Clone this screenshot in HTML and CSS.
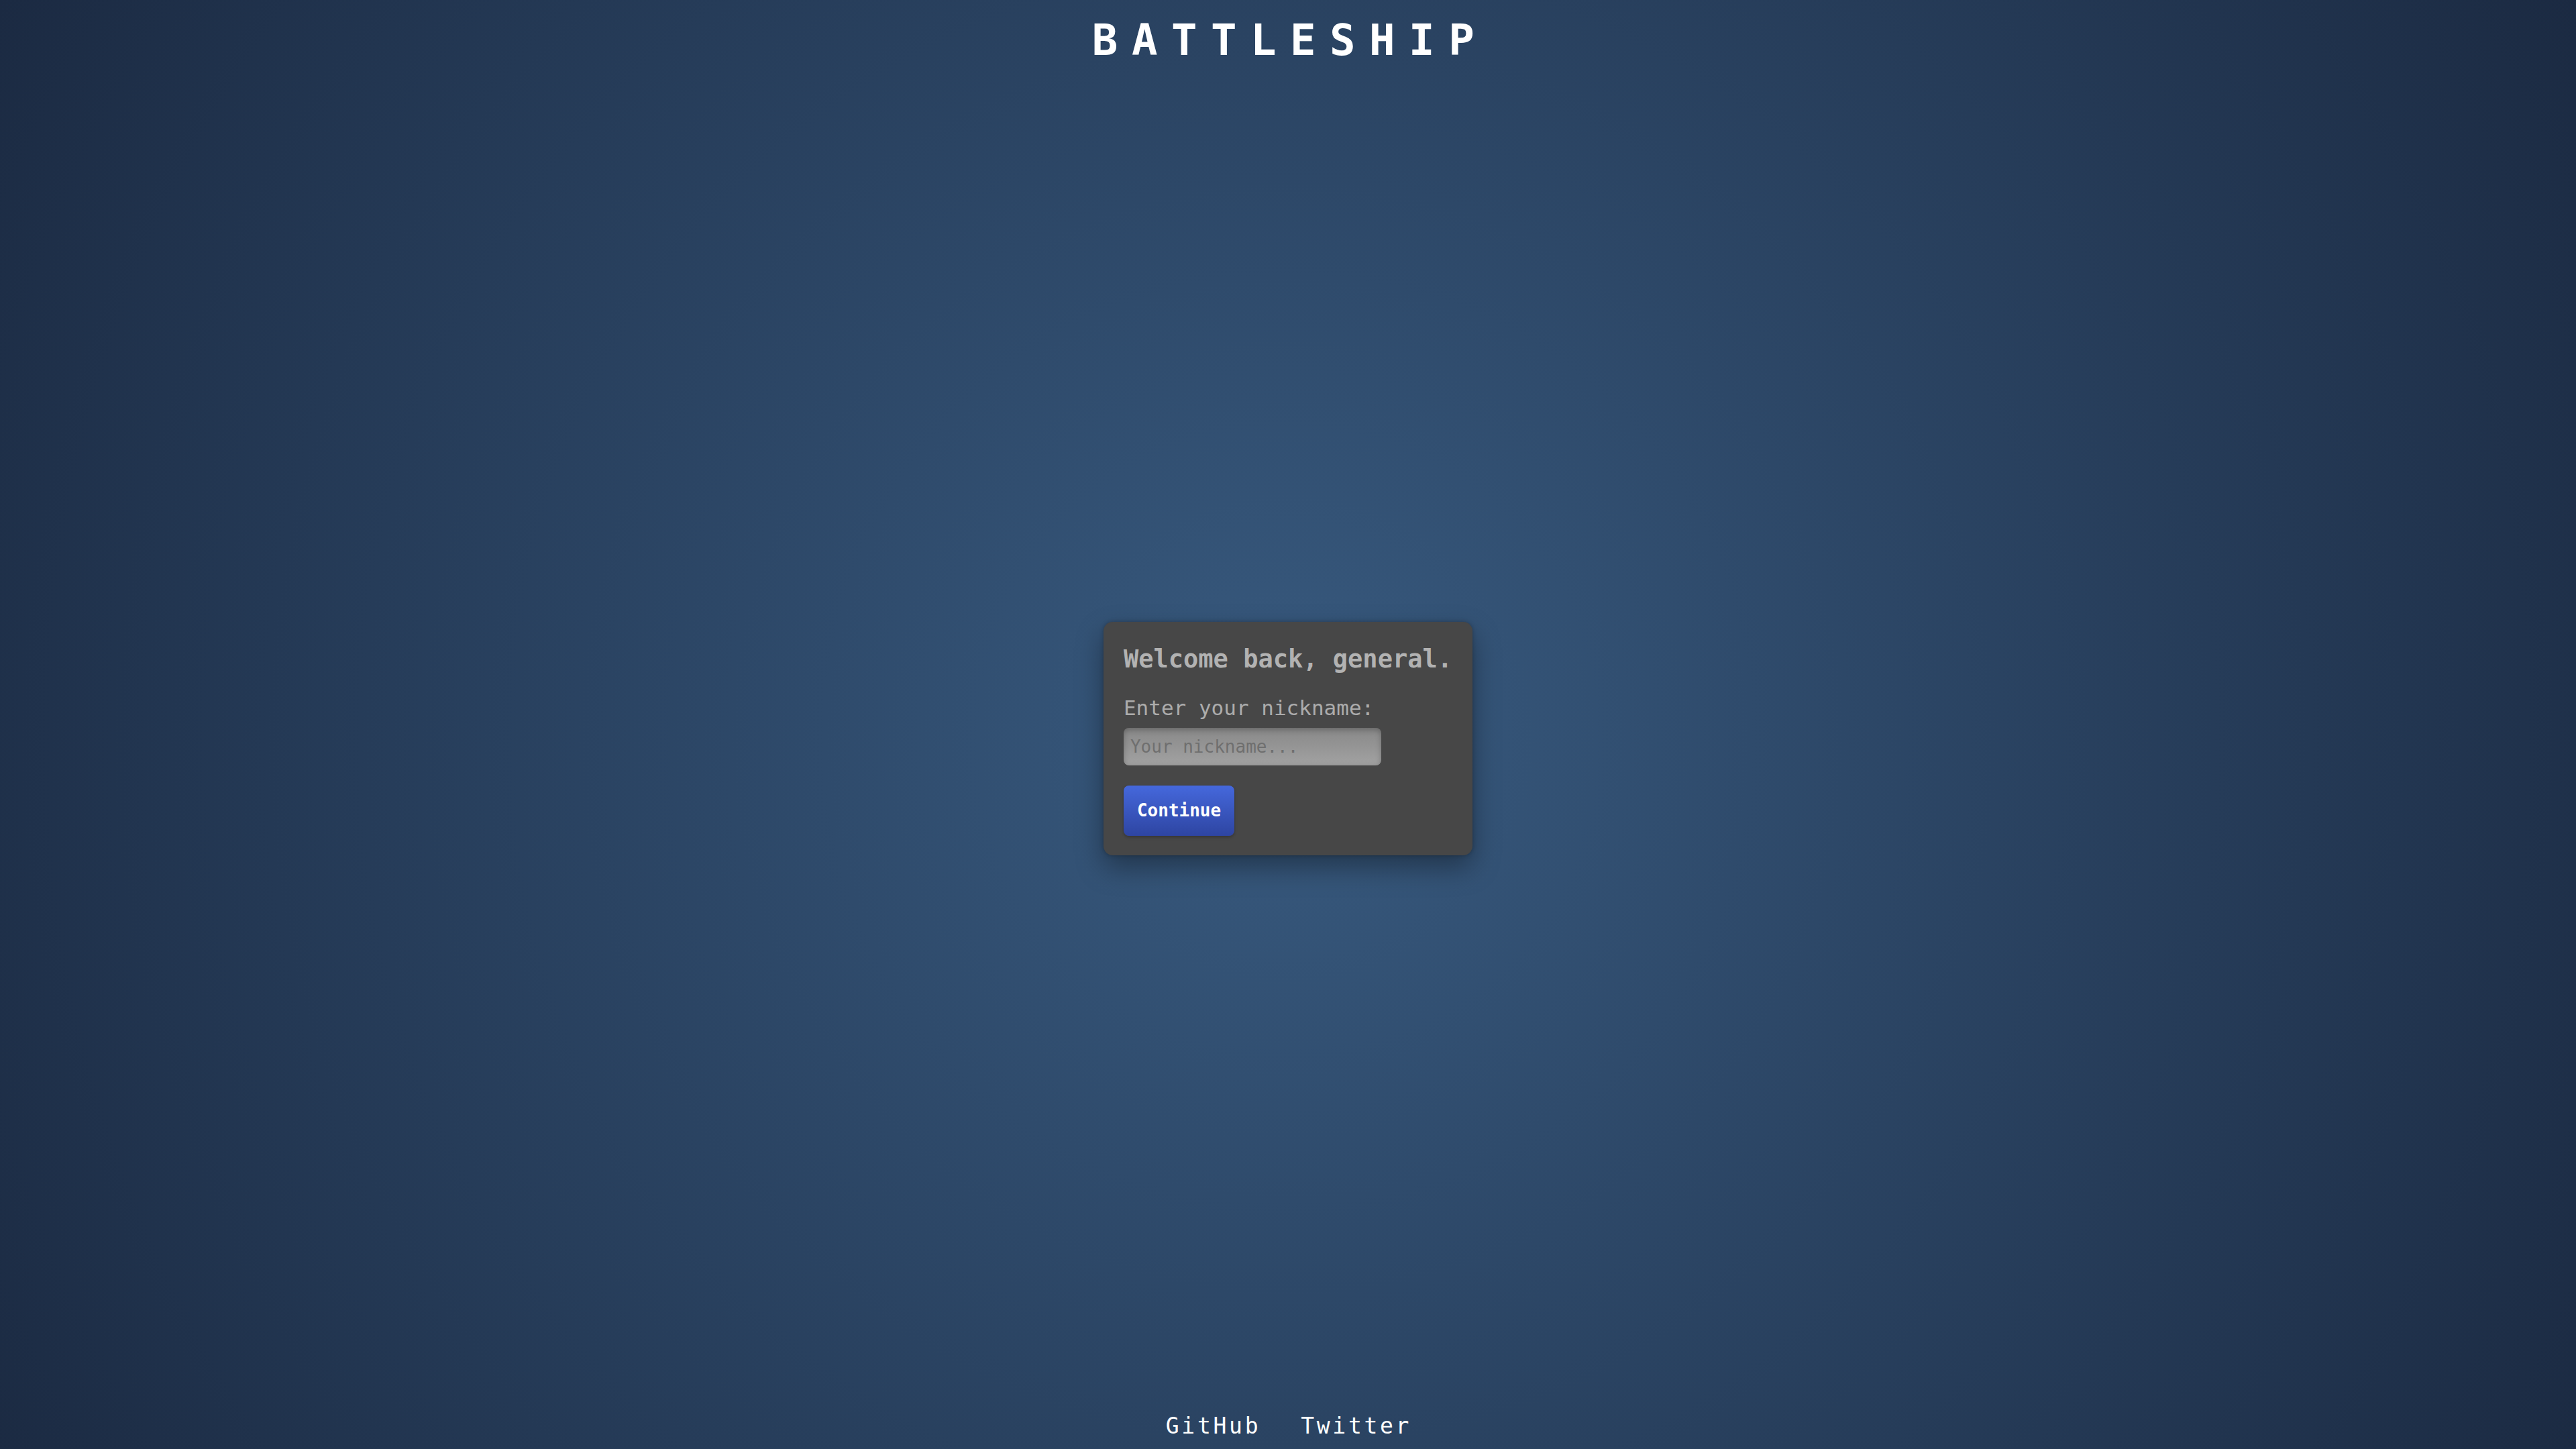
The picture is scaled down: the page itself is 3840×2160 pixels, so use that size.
FILE: index.html
```html
<!DOCTYPE html>
<html lang="en">
<head>
<meta charset="utf-8">
<title>Battleship</title>
<link rel="stylesheet" href="styles.css">
</head>
<body>
<header class="top">
  <h1 class="title">BATTLESHIP</h1>
</header>
<main class="stage">
  <section class="card">
    <h2 class="card-title">Welcome back, general.</h2>
    <label class="field-label" for="nick">Enter your nickname:</label>
    <input class="field" id="nick" type="text" placeholder="Your nickname...">
    <button class="btn" type="button">Continue</button>
  </section>
</main>
<footer class="foot">
  <a class="foot-link" href="#">GitHub</a>
  <a class="foot-link" href="#">Twitter</a>
</footer>
</body>
</html>
```

FILE: styles.css
```css
html, body {
  margin: 0;
  padding: 0;
  height: 100%;
}

body {
  display: flex;
  flex-direction: column;
  min-height: 100vh;
  font-family: "DejaVu Sans Mono", "Liberation Mono", monospace;
  background: radial-gradient(circle farthest-corner at 50% 51%, #385a7f 0%, #1b2a42 100%);
  color: #fff;
}

.top {
  padding-top: 28px;
  text-align: center;
}

.title {
  margin: 0;
  font-size: 64px;
  line-height: 1;
  font-weight: bold;
  letter-spacing: 20.5px;
  color: #ffffff;
  padding-left: 6px;
}

.stage {
  flex: 1;
  display: flex;
  align-items: center;
  justify-content: center;
  padding-top: 0;
}

.card {
  display: flex;
  flex-direction: column;
  align-items: flex-start;
  background: #474747;
  border-radius: 14px;
  padding: 37px 30px 29px 30px;
  box-shadow: 0 18px 40px rgba(0, 0, 0, 0.35), 0 0 6px rgba(0, 0, 0, 0.25);
}

.card-title {
  margin: 0;
  font-size: 37px;
  line-height: 1;
  font-weight: bold;
  color: #b2b2b2;
}

.field-label {
  margin-top: 39px;
  font-size: 31px;
  line-height: 1;
  color: #acacac;
}

.field {
  margin-top: 14px;
  box-sizing: border-box;
  width: 384px;
  height: 56px;
  padding: 0 10px;
  border: none;
  border-radius: 8px;
  font-family: "DejaVu Sans Mono", "Liberation Mono", monospace;
  font-size: 26px;
  color: #333;
  background: linear-gradient(#888888, #a2a2a2);
  box-shadow: inset 0 3px 8px rgba(0, 0, 0, 0.25);
  outline: none;
}

.field::placeholder {
  color: #6f6f6f;
}

.btn {
  margin-top: 30px;
  box-sizing: border-box;
  height: 75px;
  padding: 0 20px;
  border: none;
  border-radius: 8px;
  font-family: "DejaVu Sans Mono", "Liberation Mono", monospace;
  font-size: 26px;
  font-weight: bold;
  color: #ffffff;
  background: linear-gradient(#4568dc, #2e45a2);
  box-shadow: 0 2px 4px rgba(0, 0, 0, 0.25);
}

.foot {
  display: flex;
  justify-content: center;
  gap: 60px;
  padding-bottom: 18px;
  padding-left: 2px;
}

.foot-link {
  font-size: 33px;
  line-height: 1;
  letter-spacing: 3.7px;
  color: #ffffff;
  text-decoration: none;
}
```
